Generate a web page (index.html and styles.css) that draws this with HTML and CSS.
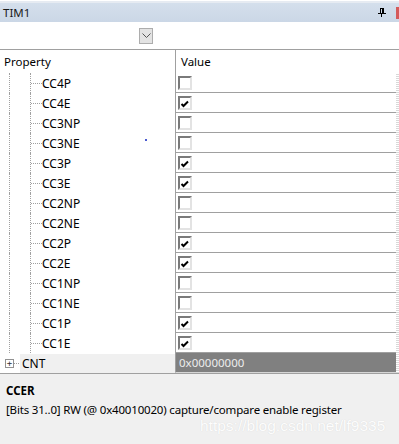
FILE: index.html
```html
<!DOCTYPE html>
<html lang="en">

<head>
  <meta charset="UTF-8">
  <meta name="viewport" content="width=device-width">
  <title>TIM1</title>
  <link rel="stylesheet" href="styles.css">
</head>

<body>
  <div id='panel'>
    <div class='titlebar'>
      <span class='title'>TIM1</span>
      <svg class='pin' width='8' height='9' viewBox='0 0 8 9'>
        <path d='M2 0.5h4M2.5 0.5v5M5.5 0.5v5M4.5 0.5v5M0 5.5h8M3.5 6v3' stroke='#000' stroke-width='1' fill='none'/>
      </svg>
      <span class='close-edge'></span>
    </div>
    <div class='toolbar'>
      <button class='drop'>
        <svg width='9' height='6' viewBox='0 0 9 6'><path d='M0.5 0.5l4 4 4-4' stroke='#555' fill='none'/></svg>
      </button>
    </div>

    <div class='grid'>
      <div class='head'>
        <div class='name'>Property</div>
        <div class='value'>Value</div>
      </div>

      <div class='rows'>
        <div class='row'><div class='name'><i class='rail'></i><i class='elbow'></i>CC4P</div><div class='value'><span class='check'></span></div></div>
        <div class='row'><div class='name'><i class='rail'></i><i class='elbow'></i>CC4E</div><div class='value'><span class='check on'></span></div></div>
        <div class='row'><div class='name'><i class='rail'></i><i class='elbow'></i>CC3NP</div><div class='value'><span class='check'></span></div></div>
        <div class='row'><div class='name'><i class='rail'></i><i class='elbow'></i>CC3NE<i class='speck'></i></div><div class='value'><span class='check'></span></div></div>
        <div class='row'><div class='name'><i class='rail'></i><i class='elbow'></i>CC3P</div><div class='value'><span class='check on'></span></div></div>
        <div class='row'><div class='name'><i class='rail'></i><i class='elbow'></i>CC3E</div><div class='value'><span class='check on'></span></div></div>
        <div class='row'><div class='name'><i class='rail'></i><i class='elbow'></i>CC2NP</div><div class='value'><span class='check'></span></div></div>
        <div class='row'><div class='name'><i class='rail'></i><i class='elbow'></i>CC2NE</div><div class='value'><span class='check'></span></div></div>
        <div class='row'><div class='name'><i class='rail'></i><i class='elbow'></i>CC2P</div><div class='value'><span class='check on'></span></div></div>
        <div class='row'><div class='name'><i class='rail'></i><i class='elbow'></i>CC2E</div><div class='value'><span class='check on'></span></div></div>
        <div class='row'><div class='name'><i class='rail'></i><i class='elbow'></i>CC1NP</div><div class='value'><span class='check'></span></div></div>
        <div class='row'><div class='name'><i class='rail'></i><i class='elbow'></i>CC1NE</div><div class='value'><span class='check'></span></div></div>
        <div class='row'><div class='name'><i class='rail'></i><i class='elbow'></i>CC1P</div><div class='value'><span class='check on'></span></div></div>
        <div class='row'><div class='name'><i class='rail'></i><i class='elbow'></i>CC1E</div><div class='value'><span class='check on'></span></div></div>
        <div class='row selected'>
          <div class='name'><span class='expander'>+</span><i class='stub'></i><span class='label'>CNT</span></div>
          <div class='value'>0x00000000</div>
        </div>
      </div>
    </div>

    <div class='info'>
      <div class='info-title'>CCER</div>
      <div class='info-text'>[Bits 31..0] RW (@ 0x40010020) capture/compare enable register</div>
      <span class='watermark'>https://blog.csdn.net/lf9335</span>
    </div>
  </div>
</body>

</html>
```

FILE: styles.css
```css
* {
  box-sizing: border-box;
}

html,
body {
  margin: 0;
  padding: 0;
  width: 399px;
  height: 444px;
  overflow: hidden;
  background-color: #fff;
  --line: #a0a0a0;
  --dots: #a0a0a0;
  --font: 'Noto Sans', sans-serif;
  font-family: var(--font);
  font-size: 11.5px;
  color: #000;
}

#panel {
  display: flex;
  flex-direction: column;
  height: 444px;
}

.titlebar {
  height: 21px;
  margin-top: 1px;
  display: flex;
  align-items: center;
  padding-left: 3px;
  background: linear-gradient(#d4dfec, #cbd7e6);
  border-top: 2px solid #e6ebf2;
}

.title {
  flex: 1;
  font-size: 11.5px;
  color: #1a1a1a;
}

.pin {
  margin-right: 10px;
}

.close-edge {
  width: 3px;
  height: 12px;
  background-color: #d45a5a;
}

.toolbar {
  height: 27px;
  display: flex;
  align-items: center;
  padding-left: 139px;
}

.drop {
  width: 14px;
  height: 16px;
  margin: 0;
  padding: 0;
  display: grid;
  place-items: center;
  background-color: #e3e3e3;
  border: 1px solid #adadad;
}

.grid {
  border-top: 1px solid var(--line);
  display: flex;
  flex-direction: column;
}

.head,
.row {
  display: grid;
  grid-template-columns: 175px 221px 3px;
}

.head {
  height: 23px;
}

.head .name {
  padding-left: 4px;
  display: flex;
  align-items: center;
}

.head .value {
  padding-left: 5px;
  display: flex;
  align-items: center;
}

.value {
  border-left: 1px solid var(--line);
}

.rows {
  background:
    repeating-linear-gradient(#fff 0 1px, #d8d8d8 1px 2px) right top / 3px 100% no-repeat;
}

.row {
  height: 20px;
}

.row .name {
  display: flex;
  align-items: center;
  height: 20px;
  font-size: 12px;
}

.row .value {
  grid-column: 2;
  border-bottom: 1px solid var(--line);
  display: flex;
  align-items: center;
  padding-left: 2px;
}

.rail {
  align-self: stretch;
  width: 21px;
  margin-left: 9px;
  border-left: 1px dotted var(--dots);
}

.elbow {
  align-self: stretch;
  width: 12px;
  border-left: 1px dotted var(--dots);
  background: repeating-linear-gradient(to right, var(--dots) 0 1px, transparent 1px 2px) left center / 100% 1px no-repeat;
}

.speck {
  width: 2px;
  height: 2px;
  margin: 0 0 6px 65px;
  background-color: #4a5ad0;
}

.check {
  width: 14px;
  height: 14px;
  border: 2px solid;
  border-color: #7a7a7a #e3e3e3 #e3e3e3 #7a7a7a;
  background-color: #fff;
}

.check.on {
  background: #fff url("data:image/svg+xml,%3Csvg xmlns='http://www.w3.org/2000/svg' width='10' height='10'%3E%3Cpath d='M1.5 5l2 2 4.5-4.5' stroke='%23000' stroke-width='2' fill='none'/%3E%3C/svg%3E") 0 1px no-repeat;
}

.row.selected .name {
  padding-left: 5px;
}

.expander {
  width: 9px;
  height: 9px;
  border: 1px solid #919191;
  font-size: 9px;
  line-height: 6px;
  text-align: center;
  color: #333;
  background-color: #fff;
  font-family: 'DejaVu Sans Mono', monospace;
}

.stub {
  width: 6px;
  height: 1px;
  background: repeating-linear-gradient(to right, var(--dots) 0 1px, transparent 1px 2px);
}

.label {
  flex: 1;
  align-self: stretch;
  display: flex;
  align-items: center;
  padding-left: 2px;
  margin-top: 1px;
  background-color: #f0f0f0;
}

.row.selected .value {
  background-color: #808080;
  color: #ececec;
  padding-left: 3px;
  border-bottom: 1px solid #d6d6d6;
}

.info {
  flex: 1;
  border-top: 1px solid var(--line);
  background-color: #f0f0f0;
  padding: 9px 6px;
  position: relative;
}

.info-title {
  font-weight: bold;
  line-height: 15px;
  margin-bottom: 4px;
}

.info-text {
  line-height: 15px;
  letter-spacing: -0.18px;
}

.watermark {
  position: absolute;
  left: 200px;
  top: 44px;
  line-height: 1;
  font-family: 'Liberation Sans', sans-serif;
  font-size: 15.5px;
  color: #fdfdfd;
  text-shadow: 0 0 1px #d2d2d2;
}
```
